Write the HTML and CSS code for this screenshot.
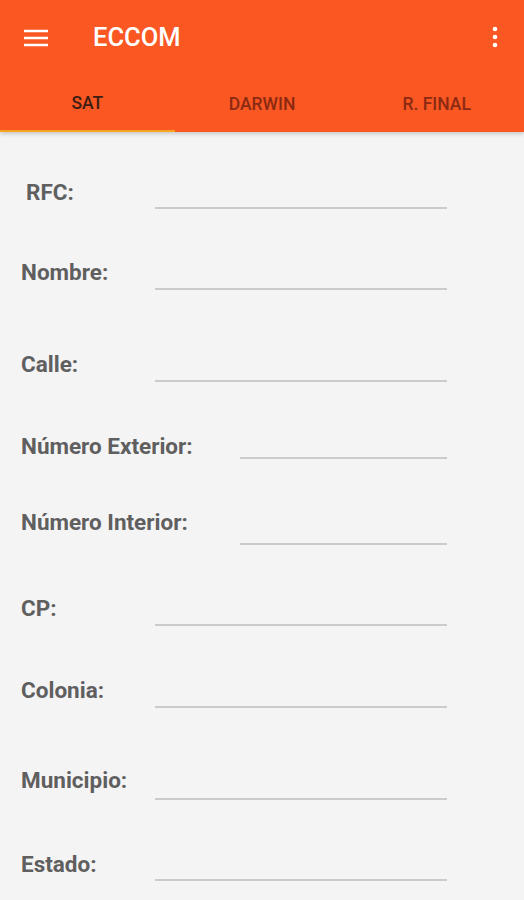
FILE: index.html
```html
<!DOCTYPE html>
<html>
  <head>
    <title>ECCOM</title>
    <link rel="stylesheet" href="styles.css">
  </head>
  <body>
    <div class="appbar">
      <div class="toolbar">
        <svg class="menu" width="24" height="24" viewBox="0 0 24 24">
          <path d="M0 5h24M0 12h24M0 19h24" stroke="#fff" stroke-width="2.6"/>
        </svg>
        <span class="title">ECCOM</span>
        <svg class="more" width="6" height="22" viewBox="0 0 6 22">
          <circle cx="3" cy="3" r="2.3" fill="#fff"/>
          <circle cx="3" cy="11" r="2.3" fill="#fff"/>
          <circle cx="3" cy="19" r="2.3" fill="#fff"/>
        </svg>
      </div>
      <div class="tabs">
        <div class="tab active">SAT</div>
        <div class="tab">DARWIN</div>
        <div class="tab">R. FINAL</div>
      </div>
    </div>
    <div class="form">
      <div class="row r1"><label class="rfc">RFC:</label><div class="field"></div></div>
      <div class="row r2"><label>Nombre:</label><div class="field"></div></div>
      <div class="row r3"><label>Calle:</label><div class="field"></div></div>
      <div class="row r4 wide"><label>Número Exterior:</label><div class="field"></div></div>
      <div class="row r5 wide"><label>Número Interior:</label><div class="field"></div></div>
      <div class="row r6"><label>CP:</label><div class="field"></div></div>
      <div class="row r7"><label>Colonia:</label><div class="field"></div></div>
      <div class="row r8"><label>Municipio:</label><div class="field"></div></div>
      <div class="row r9"><label>Estado:</label><div class="field"></div></div>
    </div>
  </body>
</html>
```

FILE: styles.css
```css
body {
  margin: 0;
  background-color: #f5f4f5;
  font-family: Roboto, "Liberation Sans", sans-serif;
  overflow: hidden;
}
.appbar {
  background-color: #fa5722;
  box-shadow: 0 2px 4px rgba(0, 0, 0, 0.18);
  position: relative;
}
.toolbar {
  height: 74px;
  display: flex;
  align-items: center;
  padding: 0 26px 0 24px;
}
.menu {
  margin-top: 1px;
}
.title {
  color: white;
  font-size: 25.5px;
  font-weight: 500;
  margin-left: 45px;
  flex: 1;
}
.tabs {
  display: flex;
  height: 58px;
}
.tab {
  flex: 1;
  display: flex;
  align-items: center;
  justify-content: center;
  font-size: 17.5px;
  font-weight: 500;
  color: #8a2a12;
  box-sizing: border-box;
  padding-top: 2px;
}
.tab.active {
  color: #3e1d13;
  border-bottom: 2px solid #f8a51e;
}
.form {
  padding-top: 37px;
}
.row {
  display: flex;
  align-items: flex-end;
  padding-left: 21px;
  padding-right: 77px;
  margin-top: 41px;
}
.row label {
  width: 134px;
  flex-shrink: 0;
  font-size: 22.5px;
  font-weight: 700;
  color: #5f5f5f;
  line-height: 24px;
  padding-bottom: 5px;
}
.row.wide label {
  width: 219px;
}
.field {
  flex: 1;
  height: 38px;
  border-bottom: 2px solid #cbcbcb;
}
.row.r1 { margin-top: 0; }
.row.r3 { margin-top: 52px; }
.row.r4 { margin-top: 37px; }
.row.r5 { margin-top: 46px; }
.row.r7 { margin-top: 42px; }
.row.r8 { margin-top: 52px; }
.row.r2 label, .row.r3 label, .row.r6 label, .row.r7 label { padding-bottom: 6px; }
.row.r4 label { padding-bottom: 1px; }
.row.r5 label { padding-bottom: 11px; }
.row.r8 label { padding-bottom: 8px; }
.rfc {
  padding-left: 5px;
  box-sizing: border-box;
  width: 134px;
}
```
